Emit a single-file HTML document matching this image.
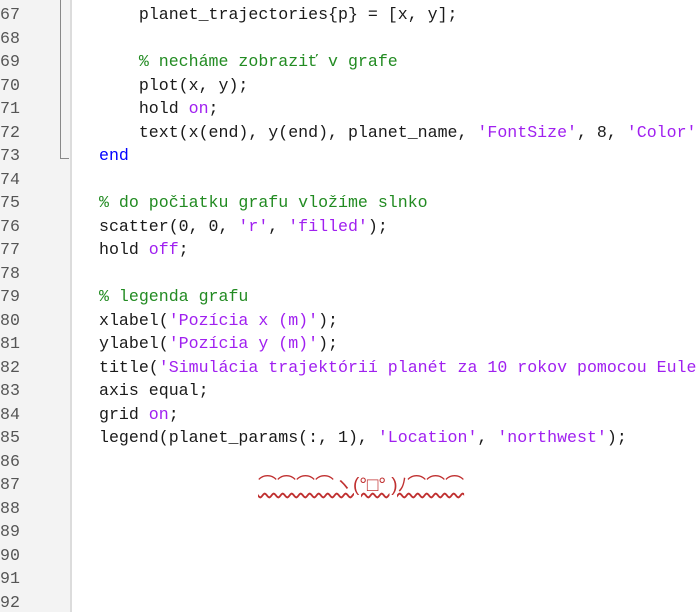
<!DOCTYPE html>
<html><head><meta charset="utf-8"><style>
body{margin:0;width:697px;height:612px;overflow:hidden;background:#fff;position:relative;font-family:"Liberation Mono","Noto Sans CJK JP",monospace;}
#g{position:absolute;left:0;top:0;width:70px;height:612px;background:#f3f3f3;border-right:2px solid #dcdcdc;}
.n{position:absolute;left:0;color:#555;font-size:16.6px;line-height:23.52px;}
.c{position:absolute;left:99px;color:#1a1a1a;font-size:16.6px;line-height:23.52px;white-space:pre;}
.cm{color:#228B22}.kw{color:#0000ff}.s{color:#a020f0}
#fold{position:absolute;left:60px;top:0;width:8px;height:158px;border-left:1px solid #888;border-bottom:1px solid #888;}
.emo{text-decoration:underline wavy #c03030;font-size:19px;color:#c03030}
</style></head><body>
<div id="g"></div><div id="fold"></div>
<div class="n" style="top:3px">67<br>68<br>69<br>70<br>71<br>72<br>73<br>74<br>75<br>76<br>77<br>78<br>79<br>80<br>81<br>82<br>83<br>84<br>85<br>86<br>87<br>88<br>89<br>90<br>91<br>92</div>
<div class="c" style="top:3px">    planet_trajectories{p} = [x, y];

    <span class="cm">% necháme zobraziť v grafe</span>
    plot(x, y);
    hold <span class="s">on</span>;
    text(x(end), y(end), planet_name, <span class="s">'FontSize'</span>, 8, <span class="s">'Color'</span>
<span class="kw">end</span>

<span class="cm">% do počiatku grafu vložíme slnko</span>
scatter(0, 0, <span class="s">'r'</span>, <span class="s">'filled'</span>);
hold <span class="s">off</span>;

<span class="cm">% legenda grafu</span>
xlabel(<span class="s">'Pozícia x (m)'</span>);
ylabel(<span class="s">'Pozícia y (m)'</span>);
title(<span class="s">'Simulácia trajektórií planét za 10 rokov pomocou Euler</span>
axis equal;
grid <span class="s">on</span>;
legend(planet_params(:, 1), <span class="s">'Location'</span>, <span class="s">'northwest'</span>);
</div>
<div style="position:absolute;left:258px;top:474px;font-family:'Liberation Sans','Noto Sans CJK JP',sans-serif;white-space:nowrap;line-height:24px"><span class="emo">⌒⌒⌒⌒ヽ(°□° )ﾉ⌒⌒⌒</span></div>
</body></html>
